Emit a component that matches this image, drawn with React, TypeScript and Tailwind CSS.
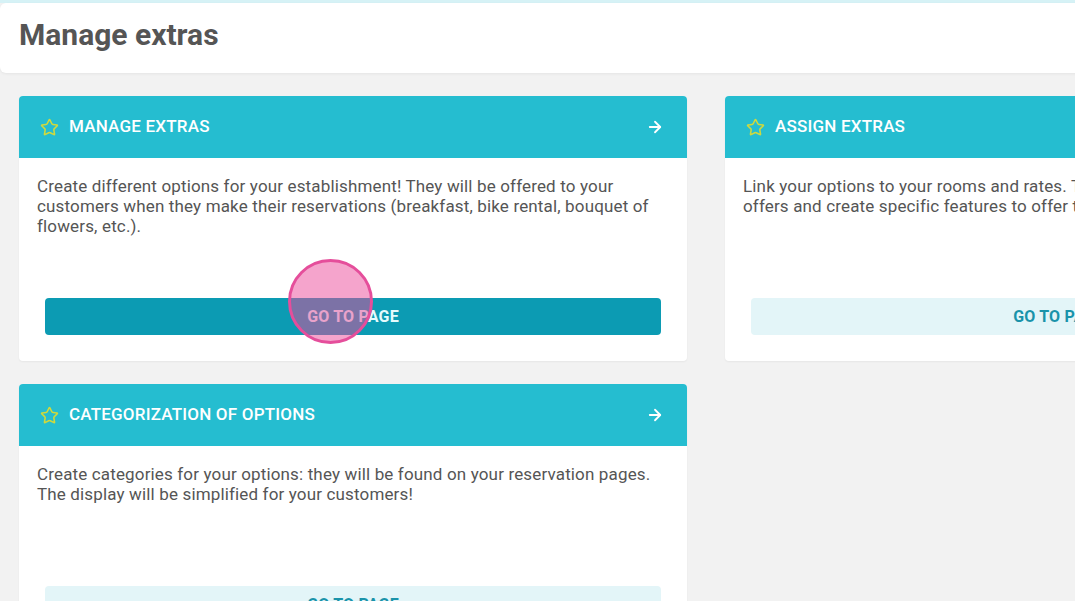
import { ArrowRight, Star } from "lucide-react";

interface ExtraCardProps {
  title: string;
  text: string;
  active?: boolean;
}

function ExtraCard({ title, text, active = false }: ExtraCardProps) {
  return (
    <div className="w-[668px] shrink-0 overflow-hidden rounded-[4px] bg-white shadow-[0_1px_2px_rgba(0,0,0,0.05)]">
      <div className="flex h-[62px] items-center bg-[#25bdd0] pl-[21px] pr-[23px] text-white">
        <Star className="h-[19px] w-[19px] text-[#cfd93d]" strokeWidth={2} />
        <span className="ml-[10px] text-[17px] font-medium tracking-[0.2px]">{title}</span>
        <ArrowRight className="ml-auto h-[18px] w-[18px]" strokeWidth={2.4} />
      </div>
      <div className="flex h-[203px] flex-col px-[18px] pt-[18px] pb-[26px]">
        <p className="text-[17px] leading-[20px] tracking-[0.15px] text-[#555]">{text}</p>
        <button
          className={
            active
              ? "mx-[8px] mt-auto h-[37px] rounded-[4px] bg-[#0c9bb3] text-[16px] font-bold tracking-[0.2px] text-[#e6fbfd]"
              : "mx-[8px] mt-auto h-[37px] rounded-[4px] bg-[#e3f5f8] text-[16px] font-bold tracking-[0.2px] text-[#1a93aa]"
          }
        >
          GO TO PAGE
        </button>
      </div>
    </div>
  );
}

export default function App() {
  return (
    <div className="relative h-[601px] w-[1075px] overflow-hidden bg-[#f2f2f2] font-['Roboto',sans-serif]">
      <div className="h-[3px] bg-[#d6f2f6]" />
      <div className="h-[70px] w-[1100px] rounded-[6px] bg-white px-[19px] pt-[14px] shadow-[0_1px_3px_rgba(0,0,0,0.06)]">
        <h1 className="text-[30px] font-bold leading-[36px] text-[#555]">Manage extras</h1>
      </div>
      <div className="grid grid-cols-[668px_668px] gap-x-[38px] gap-y-[23px] px-[19px] pt-[23px]">
        <ExtraCard
          active
          title="MANAGE EXTRAS"
          text="Create different options for your establishment! They will be offered to your customers when they make their reservations (breakfast, bike rental, bouquet of flowers, etc.)."
        />
        <ExtraCard
          title="ASSIGN EXTRAS"
          text="Link your options to your rooms and rates. Thus, you can personalize all your offers and create specific features to offer to your customers."
        />
        <ExtraCard
          title="CATEGORIZATION OF OPTIONS"
          text="Create categories for your options: they will be found on your reservation pages. The display will be simplified for your customers!"
        />
      </div>
      {/* touch indicator */}
      <div className="absolute left-[288px] top-[259px] h-[85px] w-[85px] rounded-full border-[3px] border-[#e54e9b] bg-[rgba(235,73,154,0.5)]" />
    </div>
  );
}
